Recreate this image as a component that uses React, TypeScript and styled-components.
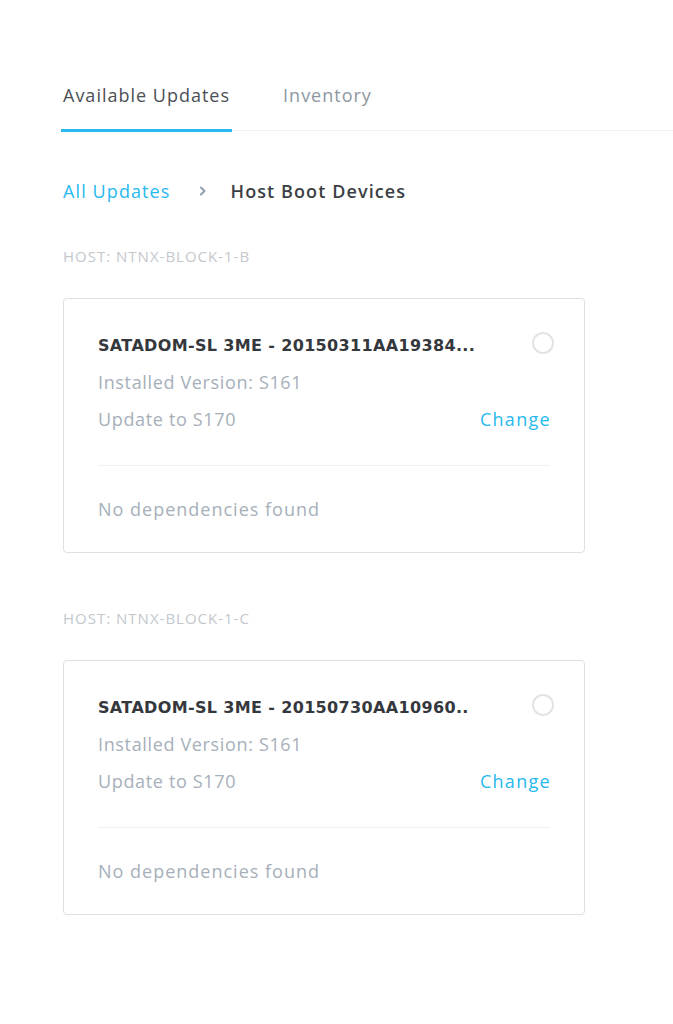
import styled, { createGlobalStyle } from 'styled-components';

const GlobalStyle = createGlobalStyle`
  html, body {
    margin: 0;
    padding: 0;
    background: #ffffff;
  }
  body {
    font-family: 'Open Sans', 'Liberation Sans', sans-serif;
    -webkit-font-smoothing: antialiased;
  }
`;

type Device = {
  host: string;
  name: string;
  installed: string;
  target: string;
};

const devices: Device[] = [
  {
    host: 'HOST: NTNX-BLOCK-1-B',
    name: 'SATADOM-SL 3ME - 20150311AA19384...',
    installed: 'S161',
    target: 'S170',
  },
  {
    host: 'HOST: NTNX-BLOCK-1-C',
    name: 'SATADOM-SL 3ME - 20150730AA10960..',
    installed: 'S161',
    target: 'S170',
  },
];

const App = () => {
  return (
    <>
      <GlobalStyle />
      <Page>
        <TabBar>
          <Tab $active>Available Updates</Tab>
          <Tab>Inventory</Tab>
        </TabBar>

        <Breadcrumb>
          <CrumbLink>All Updates</CrumbLink>
          <Chevron viewBox="0 0 8 10" aria-hidden>
            <path d="M2 1.5 L5.5 5 L2 8.5" />
          </Chevron>
          <CrumbCurrent>Host Boot Devices</CrumbCurrent>
        </Breadcrumb>

        <HostList>
          {devices.map((d) => (
            <HostGroup key={d.host}>
              <HostLabel>{d.host}</HostLabel>
              <Card>
                <CardHeader>
                  <CardTitle>{d.name}</CardTitle>
                  <Radio />
                </CardHeader>
                <InfoRow>Installed Version: {d.installed}</InfoRow>
                <InfoRow>
                  <span>Update to {d.target}</span>
                  <ChangeLink>Change</ChangeLink>
                </InfoRow>
                <CardFooter>No dependencies found</CardFooter>
              </Card>
            </HostGroup>
          ))}
        </HostList>
      </Page>
    </>
  );
};

export default App;

const Page = styled.div`
  padding: 83px 0 80px 61px;
`;

const TabBar = styled.div`
  display: flex;
  gap: 49px;
  border-bottom: 1px solid #eef0f2;
`;

const Tab = styled.div<{ $active?: boolean }>`
  padding: 0 2px 22px;
  margin-bottom: -2px;
  font-size: 18px;
  line-height: 24px;
  letter-spacing: 1px;
  color: ${({ $active }) => ($active ? '#4a4f55' : '#8e979f')};
  border-bottom: 3px solid
    ${({ $active }) => ($active ? '#27b9ef' : 'transparent')};
  cursor: pointer;
`;

const Breadcrumb = styled.div`
  display: flex;
  align-items: center;
  margin: 48px 0 0 2px;
  font-size: 18px;
  line-height: 24px;
  letter-spacing: 1.1px;
`;

const CrumbLink = styled.a`
  color: #27b9ef;
  cursor: pointer;
`;

const Chevron = styled.svg`
  width: 8px;
  height: 10px;
  margin: 0 24px 0 28px;
  fill: none;
  stroke: #8f9eac;
  stroke-width: 2;
  stroke-linecap: round;
  stroke-linejoin: round;
`;

const CrumbCurrent = styled.span`
  color: #3b3f44;
  font-weight: 600;
`;

const HostList = styled.div`
  display: flex;
  flex-direction: column;
  gap: 55px;
  margin: 43px 0 0 2px;
`;

const HostGroup = styled.section`
  display: flex;
  flex-direction: column;
  gap: 32px;
`;

const HostLabel = styled.div`
  font-size: 15px;
  line-height: 20px;
  letter-spacing: 1px;
  color: #c3c8cd;
  text-transform: uppercase;
`;

const Card = styled.div`
  width: 522px;
  box-sizing: border-box;
  padding: 28px 34px 24px 34px;
  border: 1px solid #dde1e5;
  border-radius: 4px;
  background: #fff;
`;

const CardHeader = styled.div`
  display: flex;
  align-items: flex-start;
  justify-content: space-between;
`;

const CardTitle = styled.div`
  font-family: 'DejaVu Sans', 'Open Sans', sans-serif;
  font-size: 16px;
  line-height: 37px;
  font-weight: 700;
  letter-spacing: 0.35px;
  color: #34383d;
`;

const Radio = styled.span`
  width: 22px;
  height: 22px;
  box-sizing: border-box;
  margin: 5px -4px 0 0;
  border: 2px solid #e1e4e7;
  border-radius: 50%;
`;

const InfoRow = styled.div`
  display: flex;
  justify-content: space-between;
  font-size: 18px;
  line-height: 37px;
  letter-spacing: 0.65px;
  color: #a6b0ba;
`;

const ChangeLink = styled.a`
  color: #27b9ef;
  cursor: pointer;
  letter-spacing: 1.3px;
  margin-right: -1px;
`;

const CardFooter = styled.div`
  margin-top: 27px;
  padding-top: 25px;
  border-top: 1px solid #eef0f2;
  font-size: 18px;
  line-height: 37px;
  letter-spacing: 1px;
  color: #a6b0ba;
`;
